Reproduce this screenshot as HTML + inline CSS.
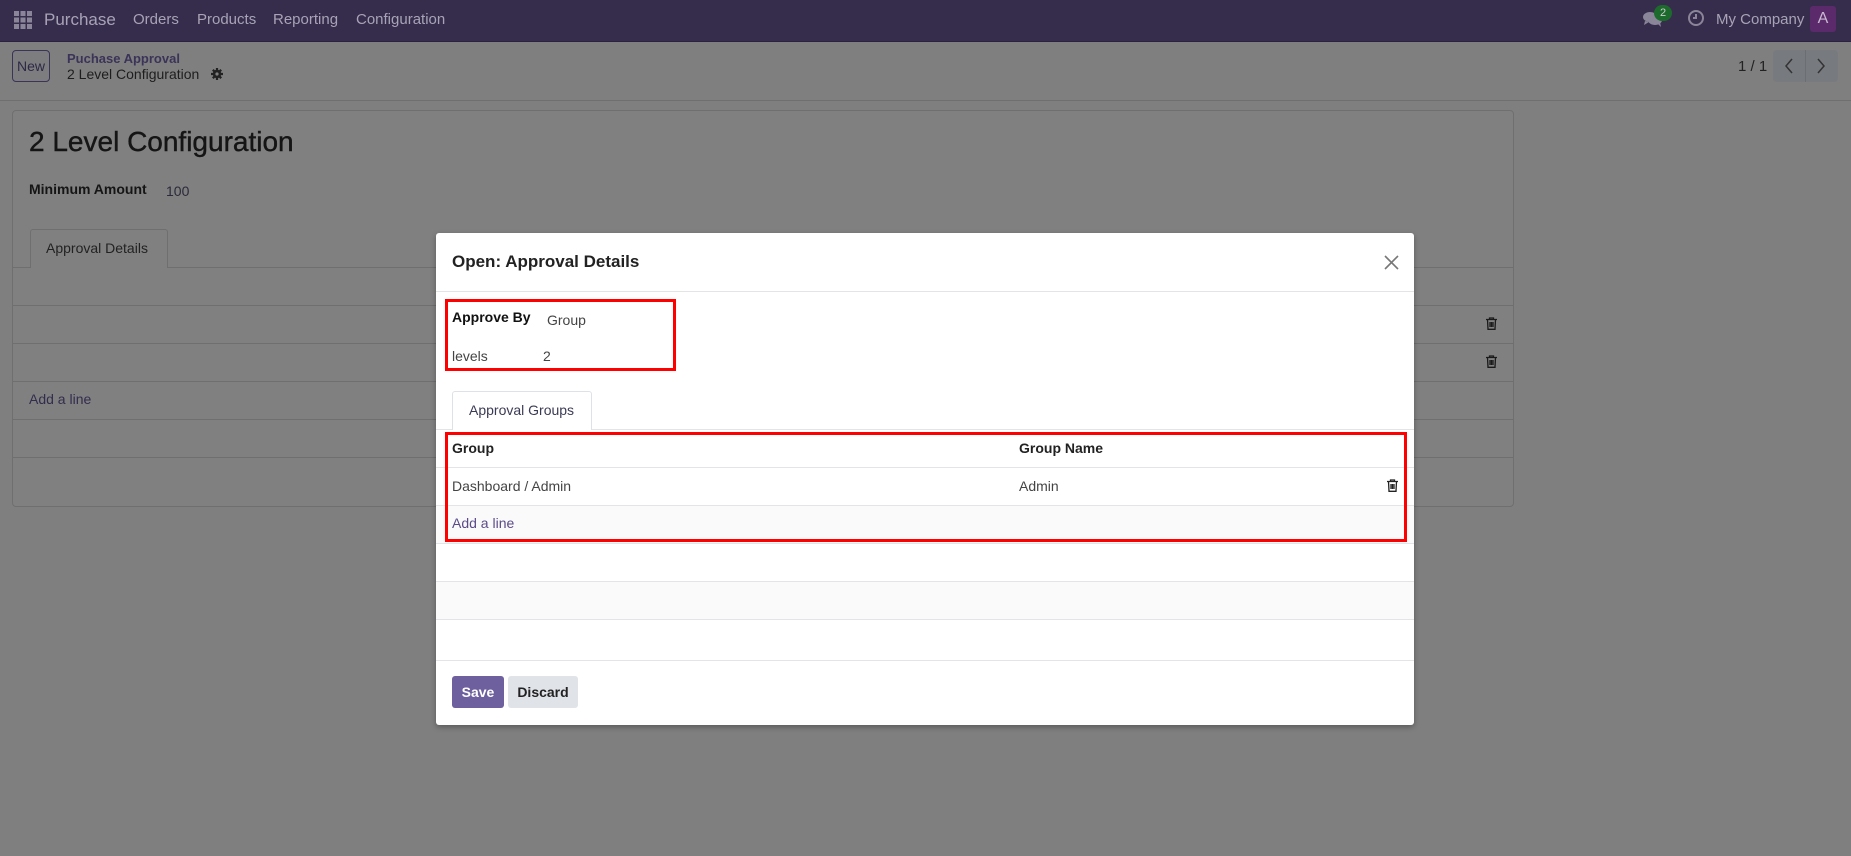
<!DOCTYPE html>
<html><head><meta charset="utf-8">
<style>
*{box-sizing:border-box;margin:0;padding:0}
body{width:1851px;height:856px;overflow:hidden;background:#7f7f7f;font-family:"Liberation Sans",sans-serif;font-size:14px;color:#2a2a2a;position:relative}
.a{position:absolute}
.nav{left:0;top:0;width:1851px;height:42px;background:#362d4c;border-bottom:1px solid #2a2240}
.nav span{position:absolute;top:11px;color:#a8a3b6;font-size:15px}
.hl{height:1px;background:#6f6f6f;position:absolute}
.ml{height:1px;background:#e2e4e8;position:absolute}
.t{position:absolute;white-space:nowrap}
.red{position:absolute;border:3px solid #ff0000}
</style></head><body>
<div class="a nav">
  <svg class="a" style="left:14px;top:11px" width="18" height="18" viewBox="0 0 18 18" fill="#8a8599"><rect x="0" y="0" width="5" height="5"/><rect x="6.5" y="0" width="5" height="5"/><rect x="13" y="0" width="5" height="5"/><rect x="0" y="6.5" width="5" height="5"/><rect x="6.5" y="6.5" width="5" height="5"/><rect x="13" y="6.5" width="5" height="5"/><rect x="0" y="13" width="5" height="5"/><rect x="6.5" y="13" width="5" height="5"/><rect x="13" y="13" width="5" height="5"/></svg>
  <span style="left:44px;font-size:17px;top:10px">Purchase</span>
  <span style="left:133px">Orders</span>
  <span style="left:197px">Products</span>
  <span style="left:273px">Reporting</span>
  <span style="left:356px">Configuration</span>
  <svg class="a" style="left:1642px;top:10px" width="22" height="18" viewBox="0 0 22 18" fill="#8a8599"><ellipse cx="8" cy="7" rx="7" ry="5"/><ellipse cx="13" cy="10" rx="7" ry="5"/><path d="M3 11 L2 15 L7 12Z M16 14 L19 17 L18 12Z"/></svg>
  <div class="a" style="left:1654px;top:5px;width:18px;height:16px;border-radius:8px;background:#1c6b2c;color:#ccc;font-size:11px;text-align:center;line-height:16px">2</div>
  <svg class="a" style="left:1687px;top:9px" width="18" height="18" viewBox="0 0 18 18" fill="none" stroke="#8a8599" stroke-width="2"><circle cx="9" cy="9" r="7"/><path d="M9 5 V9 H6"/></svg>
  <span style="left:1716px">My Company</span>
  <div class="a" style="left:1810px;top:6px;width:26px;height:26px;border-radius:3px;background:#5b2a6a;color:#c9b8d2;text-align:center;line-height:26px;font-size:16px">A</div>
</div>
<div class="a" style="left:12px;top:50px;width:38px;height:32px;border:1px solid #3b3358;border-radius:4px;color:#2e2845;font-size:14px;text-align:center;line-height:30px;background:#7d7d80">New</div>
<div class="t" style="left:67px;top:51px;font-size:13px;font-weight:bold;color:#3b3358">Puchase Approval</div>
<div class="t" style="left:67px;top:66px;font-size:14px;color:#1e1e1e">2 Level Configuration</div>
<svg class="a" style="left:211px;top:68px" width="12" height="12" viewBox="0 0 12 12" fill="#222"><circle cx="6" cy="6" r="4.2"/><g stroke="#222" stroke-width="2.2"><path d="M6 0V12M0 6H12M1.8 1.8L10.2 10.2M10.2 1.8L1.8 10.2"/></g><circle cx="6" cy="6" r="1.6" fill="#7f7f7f"/></svg>
<div class="t" style="left:1738px;top:58px;font-size:15px;color:#222">1 / 1</div>
<div class="a" style="left:1773px;top:50px;width:65px;height:32px;background:#777a7e;border-radius:4px"></div>
<div class="a" style="left:1805px;top:50px;width:1px;height:32px;background:#6b6e72"></div>
<svg class="a" style="left:1783px;top:58px" width="12" height="16" viewBox="0 0 12 16" fill="none" stroke="#333" stroke-width="1.5"><path d="M9 1L3 8L9 15"/></svg>
<svg class="a" style="left:1815px;top:58px" width="12" height="16" viewBox="0 0 12 16" fill="none" stroke="#333" stroke-width="1.5"><path d="M3 1L9 8L3 15"/></svg>
<div class="hl" style="left:0;top:100px;width:1851px"></div>
<div class="a" style="left:12px;top:110px;width:1502px;height:397px;border:1px solid #6f6f6f;border-radius:4px;background:#808080"></div>
<div class="t" style="left:29px;top:126px;font-size:28px;color:#151515;-webkit-text-stroke:0.4px #151515">2 Level Configuration</div>
<div class="t" style="left:29px;top:181px;font-size:14px;font-weight:bold;color:#151515">Minimum Amount</div>
<div class="t" style="left:166px;top:183px;font-size:14px;color:#2a2a3a">100</div>
<div class="a" style="left:30px;top:229px;width:138px;height:39px;border:1px solid #6f6f6f;border-bottom:none;border-radius:3px 3px 0 0;background:#808080"></div>
<div class="t" style="left:46px;top:240px;font-size:14px;color:#222">Approval Details</div>
<div class="hl" style="left:13px;top:267px;width:17px"></div>
<div class="hl" style="left:168px;top:267px;width:1345px"></div>
<div class="hl" style="left:13px;top:305px;width:1500px"></div>
<div class="hl" style="left:13px;top:343px;width:1500px"></div>
<div class="hl" style="left:13px;top:381px;width:1500px"></div>
<div class="hl" style="left:13px;top:419px;width:1500px"></div>
<div class="hl" style="left:13px;top:457px;width:1500px"></div>
<div class="t" style="left:29px;top:391px;font-size:14px;color:#332c4d">Add a line</div>
<svg class="a" style="left:1486px;top:317px" width="11" height="13" viewBox="0 0 11 13" fill="none" stroke="#1a1a1a" stroke-width="1.3"><path d="M0 2.5H11M3.5 2.5V1H7.5V2.5M1.5 2.5L2 12.3H9L9.5 2.5M4 5V10M5.5 5V10M7 5V10"/></svg>
<svg class="a" style="left:1486px;top:355px" width="11" height="13" viewBox="0 0 11 13" fill="none" stroke="#1a1a1a" stroke-width="1.3"><path d="M0 2.5H11M3.5 2.5V1H7.5V2.5M1.5 2.5L2 12.3H9L9.5 2.5M4 5V10M5.5 5V10M7 5V10"/></svg>
<div class="a" style="left:436px;top:233px;width:978px;height:492px;background:#fff;border-radius:3px;box-shadow:0 2px 6px rgba(0,0,0,.3)"></div>
<div class="t" style="left:452px;top:252px;font-size:17px;font-weight:bold;color:#222">Open: Approval Details</div>
<svg class="a" style="left:1384px;top:255px" width="15" height="15" viewBox="0 0 15 15" stroke="#777" stroke-width="1.6"><path d="M1 1L14 14M14 1L1 14"/></svg>
<div class="ml" style="left:436px;top:291px;width:978px"></div>
<div class="t" style="left:452px;top:309px;font-size:14px;font-weight:bold;color:#111">Approve By</div>
<div class="t" style="left:547px;top:312px;font-size:14px;color:#444">Group</div>
<div class="t" style="left:452px;top:348px;font-size:14px;color:#444">levels</div>
<div class="t" style="left:543px;top:348px;font-size:14px;color:#444">2</div>
<div class="red" style="left:445px;top:299px;width:231px;height:72px"></div>
<div class="a" style="left:452px;top:391px;width:140px;height:39px;border:1px solid #dee2e6;border-bottom:none;border-radius:3px 3px 0 0;background:#fff"></div>
<div class="t" style="left:469px;top:402px;font-size:14px;color:#3a3a55">Approval Groups</div>
<div class="ml" style="left:436px;top:429px;width:16px"></div>
<div class="ml" style="left:592px;top:429px;width:822px"></div>
<div class="t" style="left:452px;top:440px;font-size:14px;font-weight:bold;color:#222">Group</div>
<div class="t" style="left:1019px;top:440px;font-size:14px;font-weight:bold;color:#222">Group Name</div>
<div class="ml" style="left:436px;top:467px;width:978px"></div>
<div class="t" style="left:452px;top:478px;font-size:14px;color:#444">Dashboard / Admin</div>
<div class="t" style="left:1019px;top:478px;font-size:14px;color:#444">Admin</div>
<svg class="a" style="left:1387px;top:479px" width="11" height="13" viewBox="0 0 11 13" fill="none" stroke="#222" stroke-width="1.3"><path d="M0 2.5H11M3.5 2.5V1H7.5V2.5M1.5 2.5L2 12.3H9L9.5 2.5M4 5V10M5.5 5V10M7 5V10"/></svg>
<div class="ml" style="left:436px;top:505px;width:978px"></div>
<div class="a" style="left:436px;top:506px;width:978px;height:37px;background:#fafafa"></div>
<div class="t" style="left:452px;top:515px;font-size:14px;color:#5b4b8a">Add a line</div>
<div class="ml" style="left:436px;top:543px;width:978px"></div>
<div class="a" style="left:436px;top:582px;width:978px;height:37px;background:#fafafa"></div>
<div class="ml" style="left:436px;top:581px;width:978px"></div>
<div class="ml" style="left:436px;top:619px;width:978px"></div>
<div class="red" style="left:445px;top:432px;width:962px;height:110px"></div>
<div class="ml" style="left:436px;top:660px;width:978px"></div>
<div class="a" style="left:452px;top:676px;width:52px;height:32px;background:#6e5f9e;border-radius:3px;color:#fff;font-weight:bold;font-size:14px;text-align:center;line-height:32px">Save</div>
<div class="a" style="left:508px;top:676px;width:70px;height:32px;background:#e0e3e8;border-radius:3px;color:#222;font-weight:bold;font-size:14px;text-align:center;line-height:32px">Discard</div>
</body></html>
